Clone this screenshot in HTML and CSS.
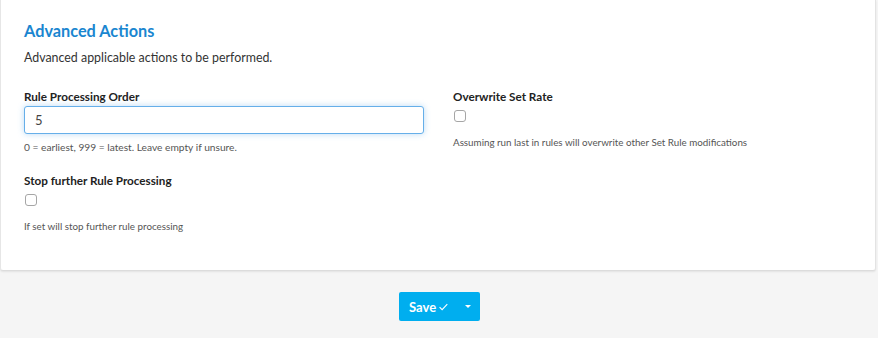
FILE: index.html
```html
<!DOCTYPE html>
<html>
<head>
<meta charset="utf-8">
<link rel="stylesheet" href="styles.css">
</head>
<body>
<div class="card">
  <h2 class="title">Advanced Actions</h2>
  <p class="desc">Advanced applicable actions to be performed.</p>
  <div class="grid">
    <div class="field">
      <label class="label">Rule Processing Order</label>
      <input class="input" type="text" value="5">
      <div class="help help-input">0 = earliest, 999 = latest. Leave empty if unsure.</div>
    </div>
    <div class="field">
      <label class="label">Overwrite Set Rate</label>
      <span class="check"></span>
      <div class="help">Assuming run last in rules will overwrite other Set Rule modifications</div>
    </div>
    <div class="field">
      <label class="label">Stop further Rule Processing</label>
      <span class="check"></span>
      <div class="help">If set will stop further rule processing</div>
    </div>
  </div>
</div>
<div class="actions">
  <div class="btn-group">
    <button class="btn btn-main">Save <svg class="tick" width="12" height="10" viewBox="0 0 12 10"><path d="M0.8 5.2 L4.2 8.6 L11.2 1.2" fill="none" stroke="#fff" stroke-width="1.5"/></svg></button>
    <button class="btn btn-caret"><span class="caret"></span></button>
  </div>
</div>
</body>
</html>
```
FILE: styles.css
```css
html, body {
  margin: 0;
  padding: 0;
}
body {
  background: #f5f5f5;
  font-family: Lato, "Open Sans", sans-serif;
  color: #333;
  width: 878px;
  height: 338px;
  overflow: hidden;
}
.card {
  background: #fff;
  margin-right: 2px;
  border-left: 1px solid #e6e6e6;
  border-right: 1px solid #e3e3e3;
  border-bottom: 1px solid #dcdcdc;
  border-radius: 0 0 3px 3px;
  box-shadow: 0 1px 2px rgba(0,0,0,0.08);
  padding: 21px 23px 24px 23px;
  height: 225px;
}
.title {
  margin: 0;
  font-size: 16.3px;
  line-height: 20px;
  font-weight: 700;
  color: #1a86d0;
}
.desc {
  margin: 9px 0 0 0;
  font-size: 12.4px;
  line-height: 16px;
  color: #333;
}
.grid {
  display: grid;
  grid-template-columns: 400px 400px;
  column-gap: 29px;
  row-gap: 20px;
  margin-top: 23px;
}
.field {
  display: flex;
  flex-direction: column;
  align-items: flex-start;
}
.label {
  font-size: 11.7px;
  font-weight: 700;
  line-height: 15px;
  color: #222;
}
.input {
  box-sizing: border-box;
  width: 400px;
  height: 28px;
  margin-top: 2px;
  padding: 0 10px;
  border: 1px solid #66afe9;
  border-radius: 3px;
  box-shadow: 0 0 6px rgba(102,175,233,0.45);
  font-family: Lato, sans-serif;
  font-size: 13px;
  color: #444;
  outline: none;
}
.check {
  box-sizing: border-box;
  width: 12px;
  height: 12px;
  margin-top: 6px;
  margin-left: 1px;
  border: 1px solid #a6a6a6;
  border-radius: 3px;
  background: #fff;
}
.help {
  margin-top: 14px;
  font-size: 9.8px;
  line-height: 12px;
  color: #555;
}
.help-input {
  margin-top: 7px;
  font-size: 10.2px;
}
.actions {
  display: flex;
  justify-content: center;
  padding-top: 21px;
}
.btn-group {
  display: flex;
  margin-left: 1px;
}
.btn {
  border: none;
  background: #00aeef;
  color: #fff;
  font-family: Lato, sans-serif;
  height: 29px;
  padding: 0;
  display: flex;
  align-items: center;
}
.btn-main {
  border-radius: 2px 0 0 2px;
  padding: 0 8px 0 10px;
  font-size: 13px;
  font-weight: 700;
  width: 57px;
  gap: 3px;
}
.btn-caret {
  border-radius: 0 2px 2px 0;
  width: 24px;
  justify-content: center;
}
.caret {
  width: 0;
  height: 0;
  border-left: 3px solid transparent;
  border-right: 3px solid transparent;
  border-top: 3px solid #fff;
}
```
